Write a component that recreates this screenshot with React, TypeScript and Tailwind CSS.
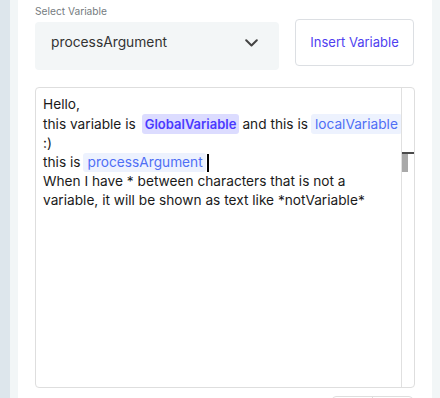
import React from "react";

export default function App() {
  const font = { fontFamily: "Inter, 'Noto Sans', sans-serif" };
  return (
    <div className="flex h-[398px] w-[440px] overflow-hidden" style={font}>
      <div className="w-[10px] shrink-0 bg-[#dde6ec]" />
      <div className="flex flex-1 bg-[#f2f6f7] px-[8px]">
        <div className="flex flex-1 flex-col bg-white pl-[17px] pr-[17px] pt-[4px]">
          <div className="flex shrink-0 items-start">
            <div className="flex w-[244px] flex-col">
              <div className="h-[14px] text-[10.2px] leading-[14px] text-[#757b80]">Select Variable</div>
              <div className="mt-[4px] flex h-[48px] items-center justify-between rounded-[4px] bg-[#f3f6f7] pb-[7px] pl-[16px] pr-[21px]">
                <span className="text-[13.8px] text-[#333]">processArgument</span>
                <svg width="13" height="8" viewBox="0 0 13 8" fill="none">
                  <path d="M1.2 1.2 L6.5 6.5 L11.8 1.2" stroke="#444" strokeWidth="2" strokeLinecap="round" strokeLinejoin="round" />
                </svg>
              </div>
            </div>
            <button className="ml-[16px] mt-[15px] flex h-[47px] w-[119px] items-center justify-center rounded-[4px] border border-[#dcdfe3] bg-white text-[13px] text-[#4f3ff0]">
              Insert Variable
            </button>
          </div>
          <div className="mt-[17px] flex h-[301px] w-[380px] shrink-0 rounded-[4px] border border-[#dedede]">
            <div className="min-w-0 flex-1 pl-[7px] pt-[7px] text-[13.7px] leading-[19px] text-[#1a1a1a]">
              <div>Hello,</div>
              <div className="flex items-center whitespace-nowrap">
                <span>this variable is</span>
                <span className="ml-[6px] rounded-[3px] bg-[#dcdcff] px-[3px] text-[13px] font-semibold leading-[20px] text-[#4a3aff]">GlobalVariable</span>
                <span className="ml-[3px]">and this is</span>
                <span className="ml-[3px] rounded-[3px] bg-[#edf2fe] px-[4px] leading-[20px] text-[#4f6ff5]">localVariable</span>
              </div>
              <div>:)</div>
              <div className="flex items-center whitespace-nowrap">
                <span>this is</span>
                <span className="ml-[2px] rounded-[3px] bg-[#edf2fe] pl-[5px] pr-[3px] leading-[19px] text-[#4f6ff5]">processArgument</span>
                <span className="ml-[1px] inline-block h-[18px] w-[2px] bg-black" />
              </div>
              <div>When I have * between characters that is not a</div>
              <div>variable, it will be shown as text like *notVariable*</div>
            </div>
            <div className="flex w-[13px] shrink-0 flex-col border-l border-[#e0e0e0]">
              <div className="h-[64px]" />
              <div className="h-[2px] bg-[#4a4a4a]" />
              <div className="h-[18px] w-[6px] bg-[#a9a9a9]" />
            </div>
          </div>
          <div className="mt-[8px] flex shrink-0 justify-end pr-[2px]">
            <div className="flex h-[10px] w-[81px] rounded-t-[4px] border border-[#dedede]">
              <div className="w-[40px] border-r border-[#dedede]" />
            </div>
          </div>
        </div>
      </div>
    </div>
  );
}
